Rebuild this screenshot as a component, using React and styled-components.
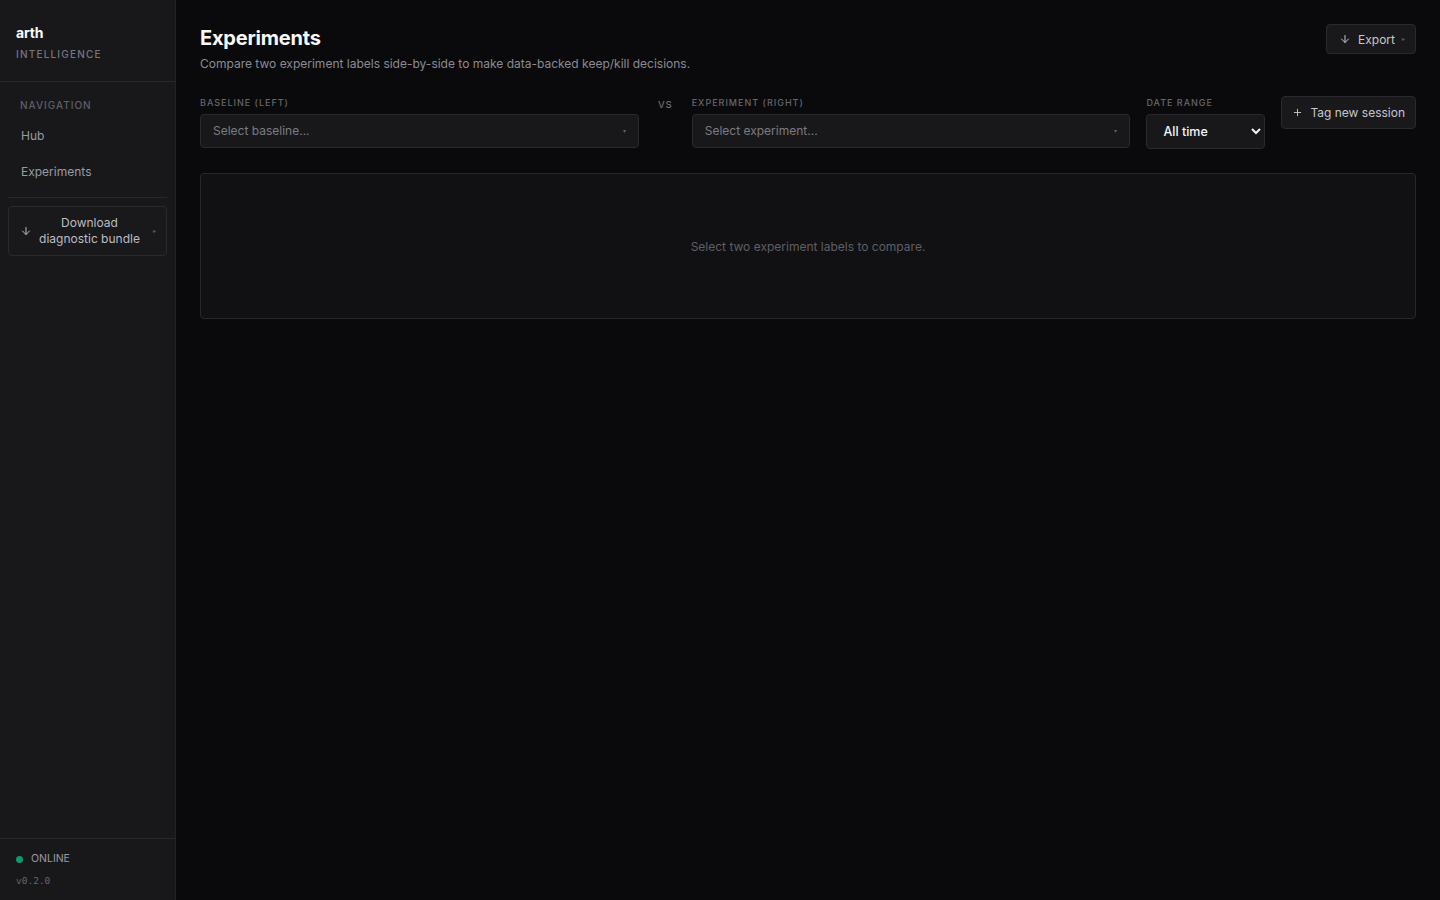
import React from "react";
import styled, { createGlobalStyle } from "styled-components";

const Global = createGlobalStyle`
  * { box-sizing: border-box; }
  html, body { margin: 0; padding: 0; background: #0a0a0c; }
  body {
    font-family: Inter, "Noto Sans", "Liberation Sans", sans-serif;
    color: #e4e4e7;
    -webkit-font-smoothing: antialiased;
  }
`;

const Shell = styled.div`
  display: flex;
  width: 100%;
  height: 900px;
  background: #0a0a0c;
`;

const Sidebar = styled.aside`
  width: 176px;
  flex: none;
  display: flex;
  flex-direction: column;
  background: #18181b;
  border-right: 1px solid #232326;
`;

const Brand = styled.div`
  padding: 24px 16px 20px;
  border-bottom: 1px solid #27272a;
`;

const BrandName = styled.div`
  font-size: 14px;
  font-weight: 700;
  color: #fafafa;
  line-height: 18px;
  letter-spacing: -0.2px;
`;

const BrandSub = styled.div`
  margin-top: 5px;
  font-size: 10px;
  font-weight: 500;
  letter-spacing: 0.12em;
  color: #76767f;
  line-height: 14px;
`;

const Nav = styled.nav`
  display: flex;
  flex-direction: column;
  padding: 16px 8px 0;
`;

const NavHeading = styled.div`
  padding: 0 12px;
  font-size: 10px;
  font-weight: 500;
  letter-spacing: 0.1em;
  color: #5f5f68;
  line-height: 14px;
  margin-bottom: 6px;
`;

const NavItem = styled.a`
  display: block;
  padding: 9px 13px;
  font-size: 12px;
  line-height: 18px;
  color: #9a9aa3;
  text-decoration: none;
  border-radius: 4px;
  cursor: pointer;
`;

const NavDivider = styled.div`
  height: 1px;
  margin: 7px 8px 8px;
  background: #27272a;
`;

const DownloadButton = styled.button`
  margin: 0 8px;
  display: flex;
  align-items: center;
  gap: 4px;
  padding: 8px 10px 8px 11px;
  background: #19191c;
  border: 1px solid #2a2a2e;
  border-radius: 4px;
  color: #bcbcc4;
  font-family: inherit;
  font-size: 12px;
  line-height: 16px;
  cursor: pointer;
`;

const DownloadLabel = styled.span`
  flex: 1;
  text-align: center;
  white-space: nowrap;
`;

const Caret = styled.span`
  font-size: 6px;
  color: #5a5a62;
  line-height: 1;
  margin-left: ${(p) => p.$gap || 0}px;
`;

const Spacer = styled.div`
  flex: 1;
`;

const Footer = styled.div`
  border-top: 1px solid #27272a;
  padding: 13px 16px 13px;
`;

const Status = styled.div`
  display: flex;
  align-items: center;
  gap: 8px;
  font-size: 10.5px;
  color: #9a9aa3;
  line-height: 14px;
`;

const Dot = styled.span`
  width: 7px;
  height: 7px;
  border-radius: 50%;
  background: #0f9b67;
`;

const Version = styled.div`
  margin-top: 9px;
  font-family: "DejaVu Sans Mono", "Liberation Mono", monospace;
  font-size: 9.5px;
  color: #66666e;
  line-height: 12px;
`;

const Main = styled.main`
  flex: 1;
  padding: 24px 24px;
  display: flex;
  flex-direction: column;
`;

const Header = styled.header`
  display: flex;
  justify-content: space-between;
  align-items: flex-start;
`;

const Title = styled.h1`
  margin: 2px 0 0;
  font-size: 20px;
  font-weight: 700;
  line-height: 24px;
  color: #fafafa;
  letter-spacing: -0.2px;
`;

const Subtitle = styled.p`
  margin: 6px 0 0;
  font-size: 12px;
  line-height: 16px;
  color: #8a8a93;
`;

const GhostButton = styled.button`
  display: inline-flex;
  align-items: center;
  gap: 7px;
  height: ${(p) => p.$h || 30}px;
  padding: 0 ${(p) => p.$px || 12}px;
  padding-right: ${(p) => p.$pr || p.$px || 12}px;
  background: #19191c;
  border: 1px solid #2a2a2e;
  border-radius: 4px;
  color: #c6c6ce;
  font-family: inherit;
  font-size: 12px;
  cursor: pointer;
  white-space: nowrap;
`;

const Controls = styled.div`
  margin-top: 24px;
  display: flex;
  align-items: flex-start;
  gap: 16px;
`;

const Field = styled.div`
  display: flex;
  flex-direction: column;
  flex: ${(p) => (p.$grow ? 1 : "none")};
  min-width: 0;
`;

const FieldLabel = styled.label`
  font-size: 9px;
  font-weight: 500;
  letter-spacing: 0.11em;
  color: #66666e;
  line-height: 12px;
  margin: 1px 0 5px;
`;

const Trigger = styled.button`
  display: flex;
  align-items: center;
  justify-content: space-between;
  height: 34px;
  padding: 0 12px 1px;
  background: #18181b;
  border: 1px solid #2a2a2e;
  border-radius: 4px;
  color: #7b7b84;
  font-family: inherit;
  font-size: 12px;
  cursor: pointer;
  text-align: left;
`;

const TriggerCaret = styled.span`
  font-size: 6px;
  color: #5f5f67;
`;

const Versus = styled.div`
  padding: 3px 1px 0;
  font-size: 9.5px;
  font-weight: 500;
  letter-spacing: 0.08em;
  color: #6a6a72;
  line-height: 12px;
  width: 21px;
  text-align: center;
`;

const NativeSelect = styled.select`
  width: 119px;
  height: 35px;
  padding: 0 6px 0 12px;
  background: #18181b;
  border: 1px solid #2a2a2e;
  border-radius: 4px;
  color: #f4f4f5;
  font-family: inherit;
  font-size: 12.5px;
  font-weight: 500;
  outline: none;
`;

const EmptyCard = styled.section`
  margin-top: 24px;
  height: 146px;
  display: flex;
  align-items: center;
  justify-content: center;
  background: #111113;
  border: 1px solid #27272a;
  border-radius: 4px;
  font-size: 12px;
  color: #5e5e66;
`;

const ArrowDown = () => (
  <svg width="12" height="12" viewBox="0 0 24 24" fill="none" stroke="currentColor" strokeWidth="2" strokeLinecap="round" strokeLinejoin="round">
    <path d="M12 5v14" />
    <path d="m19 12-7 7-7-7" />
  </svg>
);

const Plus = () => (
  <svg width="11" height="11" viewBox="0 0 24 24" fill="none" stroke="currentColor" strokeWidth="2" strokeLinecap="round">
    <path d="M5 12h14" />
    <path d="M12 5v14" />
  </svg>
);

export default function App() {
  return (
    <>
      <Global />
      <Shell>
        <Sidebar>
          <Brand>
            <BrandName>arth</BrandName>
            <BrandSub>INTELLIGENCE</BrandSub>
          </Brand>
          <Nav>
            <NavHeading>NAVIGATION</NavHeading>
            <NavItem>Hub</NavItem>
            <NavItem>Experiments</NavItem>
          </Nav>
          <NavDivider />
          <DownloadButton>
            <ArrowDown />
            <DownloadLabel>
              Download
              <br />
              diagnostic bundle
            </DownloadLabel>
            <Caret $gap={6}>▸</Caret>
          </DownloadButton>
          <Spacer />
          <Footer>
            <Status>
              <Dot />
              ONLINE
            </Status>
            <Version>v0.2.0</Version>
          </Footer>
        </Sidebar>
        <Main>
          <Header>
            <div>
              <Title>Experiments</Title>
              <Subtitle>Compare two experiment labels side-by-side to make data-backed keep/kill decisions.</Subtitle>
            </div>
            <GhostButton $pr={10}>
              <ArrowDown />
              Export
              <Caret>▸</Caret>
            </GhostButton>
          </Header>
          <Controls>
            <Field $grow>
              <FieldLabel>BASELINE (LEFT)</FieldLabel>
              <Trigger>
                Select baseline...
                <TriggerCaret>▾</TriggerCaret>
              </Trigger>
            </Field>
            <Versus>VS</Versus>
            <Field $grow>
              <FieldLabel>EXPERIMENT (RIGHT)</FieldLabel>
              <Trigger>
                Select experiment...
                <TriggerCaret>▾</TriggerCaret>
              </Trigger>
            </Field>
            <Field>
              <FieldLabel>DATE RANGE</FieldLabel>
              <NativeSelect defaultValue="all">
                <option value="all">All time</option>
                <option value="7d">Last 7 days</option>
                <option value="30d">Last 30 days</option>
              </NativeSelect>
            </Field>
            <GhostButton $h={33} $px={10}>
              <Plus />
              Tag new session
            </GhostButton>
          </Controls>
          <EmptyCard>Select two experiment labels to compare.</EmptyCard>
        </Main>
      </Shell>
    </>
  );
}
